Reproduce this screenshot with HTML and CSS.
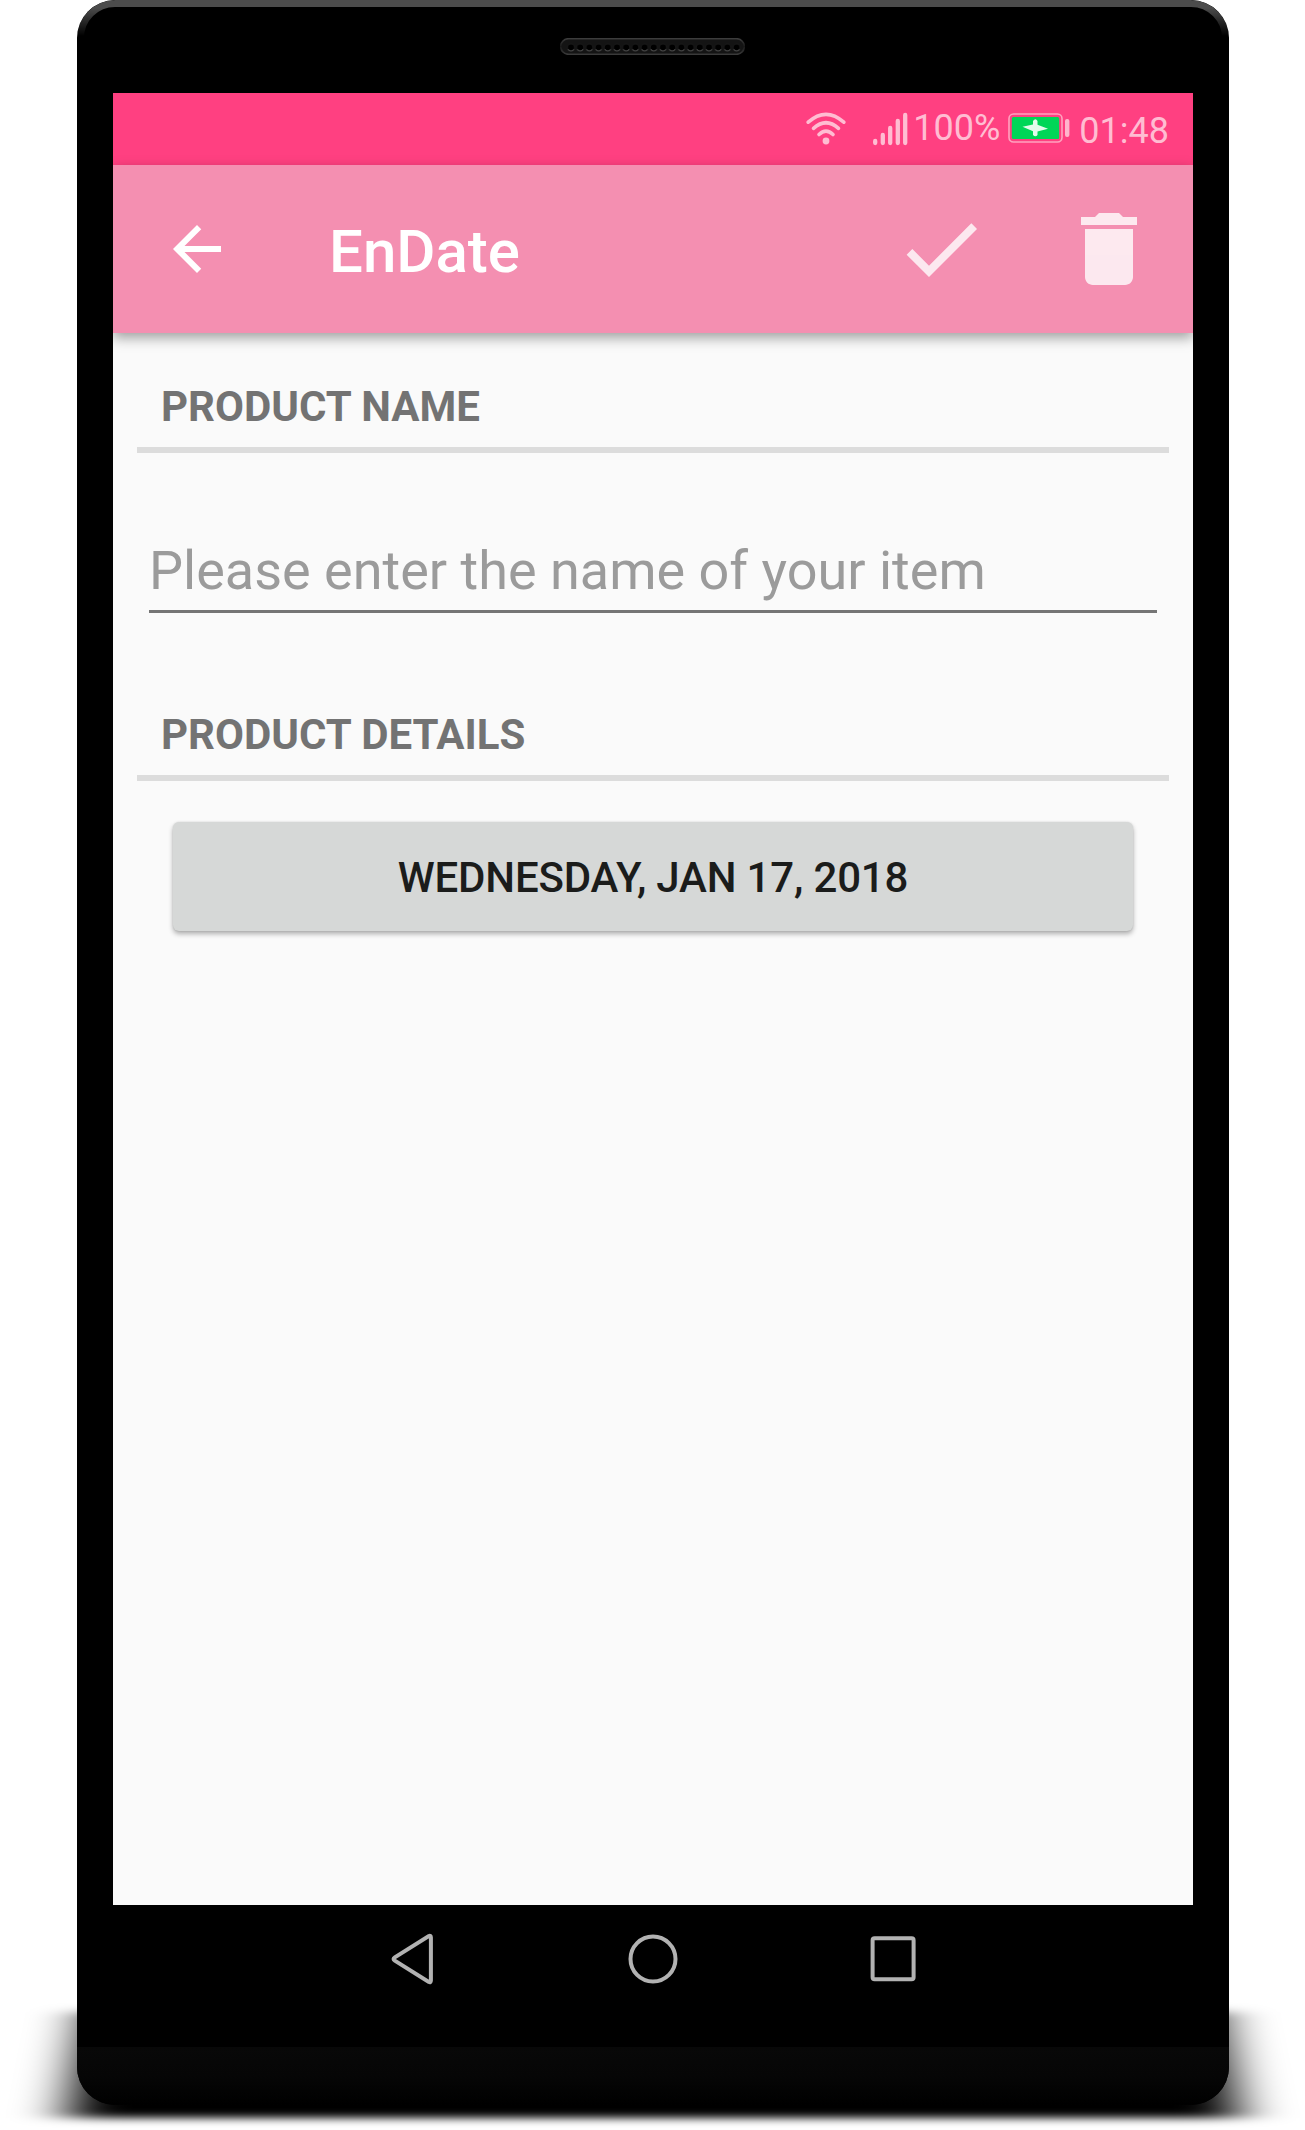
FILE: index.html
```html
<!DOCTYPE html>
<html lang="en">
<head>
<meta charset="utf-8">
<title>EnDate</title>
<link rel="stylesheet" href="styles.css">
</head>
<body>
<div class="stage">
  <svg class="ground" viewBox="0 0 1305 130" aria-hidden="true">
    <defs>
      <filter id="soft" x="-10%" y="-30%" width="120%" height="160%">
        <feGaussianBlur stdDeviation="26 4"/>
      </filter>
    </defs>
    <path d="M88 12H1218L1239 118H67Z" filter="url(#soft)"/>
  </svg>
  <div class="phone">
    <header class="bezel-top">
      <svg class="speaker" width="185" height="17" viewBox="0 0 185 17" aria-hidden="true">
        <defs>
          <linearGradient id="rim" x1="0" y1="0" x2="0" y2="1">
            <stop offset="0" stop-color="#3c3c3c"/><stop offset=".5" stop-color="#181818"/><stop offset="1" stop-color="#3a3a3a"/>
          </linearGradient>
          <pattern id="holes" x="6.4" y="0" width="9.2" height="17" patternUnits="userSpaceOnUse">
            <circle cx="4.6" cy="9.6" r="3.5" fill="#000" stroke="#171717"/>
            <path d="M1.6 11.2a3.5 3.5 0 0 0 6 0" fill="none" stroke="#484848"/>
          </pattern>
        </defs>
        <rect x=".75" y=".75" width="183.5" height="15.5" rx="7.7" fill="#141414" stroke="url(#rim)" stroke-width="1.7"/>
        <rect x="6.4" width="174.8" height="17" fill="url(#holes)"/>
      </svg>
    </header>

    <main class="screen">
      <div class="status">
        <svg class="wifi" width="40" height="34" viewBox="0 0 40 34" aria-hidden="true">
          <g fill="none" stroke="currentColor" stroke-width="3.6" stroke-linecap="round">
            <path d="M2.2 10.2Q20-5.5 37.8 10.2"/>
            <path d="M7.5 16.4Q20 5.1 32.5 16.4"/>
            <path d="M13 22.6Q20 15.6 27 22.6"/>
          </g>
          <circle cx="20" cy="29" r="3.4" fill="currentColor"/>
        </svg>
        <svg class="signal" width="35" height="34" viewBox="0 0 35 34" aria-hidden="true">
          <path d="M2.2 29v2M9.8 23v8M17.2 16v15M24.8 9v22M32.2 3v28" stroke="currentColor" stroke-width="4.3" stroke-linecap="round"/>
        </svg>
        <span class="percent">100%</span>
        <svg class="battery" width="62" height="30" viewBox="0 0 62 30" aria-hidden="true">
          <rect x="1" y="1" width="53" height="28" rx="4.5" fill="none" stroke="#ffa3bf" stroke-width="1.6"/>
          <rect x="3.8" y="4" width="47.4" height="22" rx="1.5" fill="#00d657"/>
          <path d="M14.5 13.7L25 11.5V8Q27.5 4.5 29.5 8V11.8L40 15.8L29.500 18.500V22Q27.500 24.500 25 22V18.200Z" fill="#e4fbec"/>
          <rect x="57" y="6" width="4.4" height="18" rx="2" fill="#ffb5cc"/>
        </svg>
        <span class="clock">01:48</span>
      </div>

      <div class="toolbar">
        <svg class="back" width="72" height="72" viewBox="0 0 24 24" aria-hidden="true"><path d="M20 11H7.830l5.590-5.590L12 4l-8 8 8 8 1.410-1.410L7.830 13H20v-2z"/></svg>
        <h1 class="title">EnDate</h1>
        <svg class="action" width="96" height="96" viewBox="0 0 24 24" aria-hidden="true"><path d="M9 16.170L4.830 12l-1.420 1.410L9 19 21 7l-1.410-1.410z"/></svg>
        <svg class="action" width="96" height="96" viewBox="0 0 24 24" aria-hidden="true"><path d="M6 19c0 1.100.9 2 2 2h8c1.100 0 2-.9 2-2V7H6v12zM19 4h-3.500l-1-1h-5l-1 1H5v2h14V4z"/></svg>
      </div>

      <form class="form">
        <h2 class="section">PRODUCT NAME</h2>
        <input class="field" type="text" placeholder="Please enter the name of your item" aria-label="Product name">
        <h2 class="section">PRODUCT DETAILS</h2>
        <button class="date" type="button">WEDNESDAY, JAN 17, 2018</button>
      </form>
    </main>

    <nav class="nav">
      <svg width="50" height="54" viewBox="-2 0 50 54" aria-hidden="true"><path d="M4.800 25.300Q2.300 27 4.800 28.700L38.800 50Q40.900 50.800 40.900 48.600V5.400Q40.900 3.200 38.800 4Z"/></svg>
      <svg width="54" height="54" viewBox="0 0 54 54" aria-hidden="true"><circle cx="27" cy="27" r="22.500"/></svg>
      <svg width="50" height="54" viewBox="0 0 50 54" aria-hidden="true"><rect x="4.600" y="6.300" width="41" height="41" rx="2"/></svg>
    </nav>
    <footer class="chin"></footer>
  </div>
</div>
</body>
</html>
```
FILE: styles.css
```css
* { box-sizing: border-box; }
body {
  margin: 0;
  background: #fff;
  font-family: Roboto, sans-serif;
}
.stage {
  position: relative;
  height: 2130px;
  overflow: hidden;
}
.ground {
  position: absolute;
  left: 0;
  bottom: 0;
  width: 1305px;
  height: 130px;
}
.phone {
  position: relative;
  display: flex;
  flex-direction: column;
  width: 1152px;
  height: 2105px;
  margin-left: 77px;
  padding: 0 36px;
  background: #000;
  border-radius: 38px;
  overflow: hidden;
}
/* light catching the upper edge of the case */
.phone::before {
  content: "";
  position: absolute;
  inset: 0;
  border: 7px solid #4c4c4c;
  border-radius: 38px;
  -webkit-mask-image: linear-gradient(#000 8px, transparent 36px);
  mask-image: linear-gradient(#000 8px, transparent 36px);
}
.bezel-top {
  display: flex;
  justify-content: center;
  height: 93px;
  padding: 38px 1px 0 0;
}
.screen {
  display: flex;
  flex-direction: column;
  height: 1812px;
  background: #fafafa;
  overflow: hidden;
}
.status {
  display: flex;
  align-items: flex-start;
  justify-content: flex-end;
  height: 72px;
  padding: 19px 24px 0 0;
  background: #ff4081;
  color: #ffbdd2;
  font-size: 36px;
  line-height: 42px;
}
.signal { margin: 0 5px 0 27px; }
.percent { margin-top: -5px; }
.battery { margin: 1px 9px 0 8px; }
.clock { margin-top: -2px; }
.toolbar {
  display: flex;
  align-items: center;
  gap: 72px;
  flex: none;
  height: 168px;
  padding: 0 36px 0 48px;
  background: #f48fb1;
  color: #fff;
  fill: #fff;
  box-shadow: 0 5px 12px rgba(0, 0, 0, .36);
}
.title {
  flex: 1;
  margin: 5px 0 0 24px;
  font-size: 60px;
  font-weight: 500;
  line-height: 70px;
}
.action { opacity: .8; }
.form {
  display: flex;
  flex-direction: column;
  padding: 48px 24px 0;
}
.section {
  height: 72px;
  margin: 0;
  padding-left: 24px;
  border-bottom: 6px solid #dcdcdc;
  color: #737373;
  font-size: 42px;
  font-weight: 700;
  line-height: 52px;
}
.field {
  height: 78px;
  margin: 82px 12px 96px;
  padding: 0 0 4px;
  border: 0;
  border-bottom: 3px solid #757575;
  background: none;
  font: 54px/63px Roboto, sans-serif;
}
.field::placeholder { color: #9b9b9b; opacity: 1; }
.date {
  height: 109px;
  margin: 41px 36px 0;
  padding: 3px 0 0;
  border: 0;
  border-radius: 6px;
  background: #d6d8d7;
  box-shadow: 0 3px 5px rgba(0, 0, 0, .3), 0 0 2px rgba(0, 0, 0, .12);
  color: #1b1c1b;
  font: 500 42px/50px Roboto, sans-serif;
  letter-spacing: -.18px;
}
.nav {
  display: flex;
  justify-content: center;
  gap: 188px;
  height: 142px;
  padding-top: 27px;
  fill: none;
  stroke: #b2b2b2;
  stroke-width: 4;
}
.chin {
  height: 58px;
  margin: 0 -36px;
  background: linear-gradient(#080808, #060606 50%, #000);
}
```
